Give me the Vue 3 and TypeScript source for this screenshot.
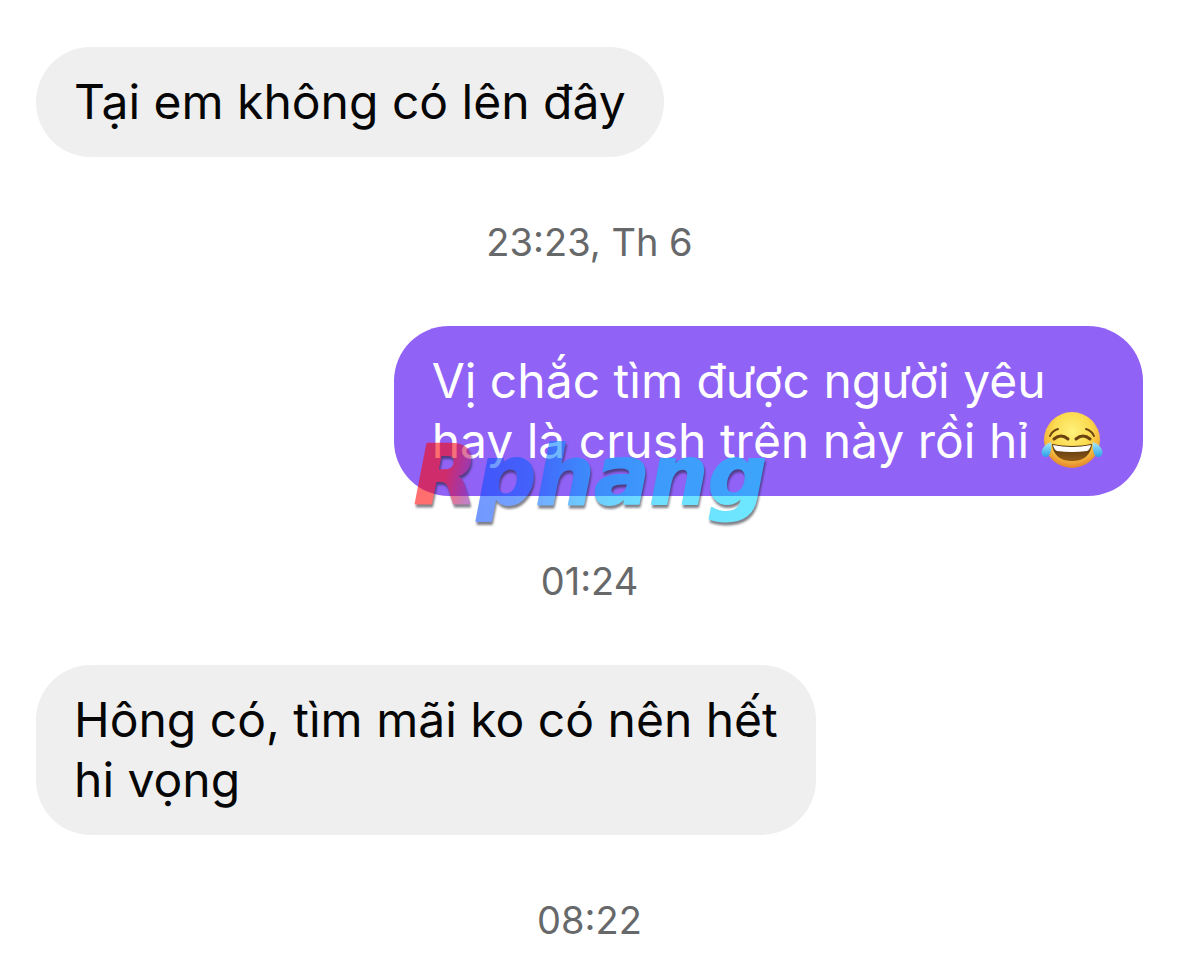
<script setup lang="ts">
interface Message {
  id: number
  side: 'in' | 'out'
  lines: string[]
  laugh?: boolean
  time: string
}

const messages: Message[] = [
  { id: 1, side: 'in', lines: ['Tại em không có lên đây'], time: '23:23, Th 6' },
  {
    id: 2,
    side: 'out',
    lines: ['Vị chắc tìm được người yêu', 'hay là crush trên này rồi hỉ'],
    laugh: true,
    time: '01:24',
  },
  { id: 3, side: 'in', lines: ['Hông có, tìm mãi ko có nên hết', 'hi vọng'], time: '08:22' },
]
</script>

<template>
  <main class="chat">
    <template v-for="m in messages" :key="m.id">
      <div class="row" :class="m.side">
        <p class="bubble">
          <span v-for="(line, i) in m.lines" :key="i" class="line">{{ line }}<svg
            v-if="m.laugh && i === m.lines.length - 1"
            class="emoji"
            viewBox="0 0 62 58"
            role="img"
            aria-label="😂"
          >
            <defs>
              <radialGradient id="face" cx="50%" cy="35%" r="66%">
                <stop offset="0" stop-color="#fff27c" />
                <stop offset="0.5" stop-color="#fbdb50" />
                <stop offset="0.78" stop-color="#f4b43c" />
                <stop offset="1" stop-color="#e0802a" />
              </radialGradient>
              <linearGradient id="mouth" x1="0" y1="0" x2="0" y2="1">
                <stop offset="0" stop-color="#4f2c0c" />
                <stop offset="1" stop-color="#8f5a17" />
              </linearGradient>
              <linearGradient id="tear" x1="0" y1="0" x2="0" y2="1">
                <stop offset="0" stop-color="#a8ecfb" />
                <stop offset="1" stop-color="#2b9fe6" />
              </linearGradient>
            </defs>
            <circle cx="31" cy="29" r="28" fill="url(#face)" />
            <g fill="none" stroke="#6b4210" stroke-linecap="round">
              <path d="M9 25Q11 20 17 18" stroke-width="2" />
              <path d="M53 25Q51 20 45 18" stroke-width="2" />
              <path d="M13 28Q20 22 27 28" stroke-width="3" />
              <path d="M35 28Q42 22 49 28" stroke-width="3" />
            </g>
            <path d="M11 33Q31 37 51 33Q49 50 31 50Q13 50 11 33Z" fill="url(#mouth)" />
            <path d="M12 34Q31 38 50 34Q49 39 46 40Q31 42 16 40Q13 39 12 34Z" fill="#fff" />
            <path d="M10 31Q11 37 9 43Q6 48 2 45Q-1 42 2 37Q5 33 10 31Z" fill="url(#tear)" />
            <path d="M52 31Q51 37 53 43Q56 48 60 45Q63 42 60 37Q57 33 52 31Z" fill="url(#tear)" />
          </svg></span>
          <svg v-if="m.laugh" class="brand" viewBox="0 0 370 110" role="img" aria-label="Rphang">
            <defs>
              <linearGradient id="brandRed" gradientUnits="userSpaceOnUse" x1="4" y1="0" x2="72" y2="16">
                <stop offset="0.6" stop-color="#ff0404" />
                <stop offset="1" stop-color="#9020a0" />
              </linearGradient>
              <linearGradient id="brandBlue" gradientUnits="userSpaceOnUse" x1="60" y1="0" x2="350" y2="0">
                <stop offset="0" stop-color="#0a48ff" />
                <stop offset="0.2" stop-color="#0a60ff" />
                <stop offset="0.4" stop-color="#00a8ff" />
                <stop offset="0.65" stop-color="#00c8ff" />
                <stop offset="1" stop-color="#00d6ff" />
              </linearGradient>
            </defs>
            <text x="4" y="79"><tspan class="red">R</tspan><tspan class="blue">phang</tspan></text>
          </svg>
        </p>
      </div>
      <time class="stamp">{{ m.time }}</time>
    </template>
  </main>
</template>

<style>
body {
  margin: 0;
  background: #fff;
}
</style>

<style scoped>
.chat {
  display: flex;
  flex-direction: column;
  padding: 47px 36px 0;
  font-family: Inter, "Liberation Sans", sans-serif;
  font-size: 48px;
  line-height: 60px;
  color: #060606;
}

.row {
  display: flex;
}

.row.out {
  justify-content: flex-end;
}

.bubble {
  position: relative;
  margin: 0;
  padding: 25px 38px;
  border-radius: 55px;
  background: #efefef;
}

.out .bubble {
  background: #9062f6;
  color: #fff;
}

.line {
  display: block;
  white-space: nowrap;
}

.emoji {
  width: 62px;
  height: 58px;
  margin: -8px 2px -8px 12px;
  vertical-align: -3px;
}

.brand {
  position: absolute;
  left: 16px;
  top: 99px;
  width: 370px;
  height: 110px;
  overflow: visible;
  opacity: 0.57;
  filter: drop-shadow(1px 3px 1px #202030);
}

.brand text {
  font: italic bold 82px "DejaVu Sans", sans-serif;
  stroke-width: 2px;
  stroke-linejoin: round;
}

.red {
  fill: url(#brandRed);
  stroke: url(#brandRed);
}

.blue {
  fill: url(#brandBlue);
  stroke: url(#brandBlue);
}

.stamp {
  padding-top: 2px;
  font-size: 38px;
  line-height: 167px;
  text-align: center;
  color: #66686a;
}

.stamp:last-child {
  line-height: 124px;
  padding: 23px 0 0;
}
</style>
